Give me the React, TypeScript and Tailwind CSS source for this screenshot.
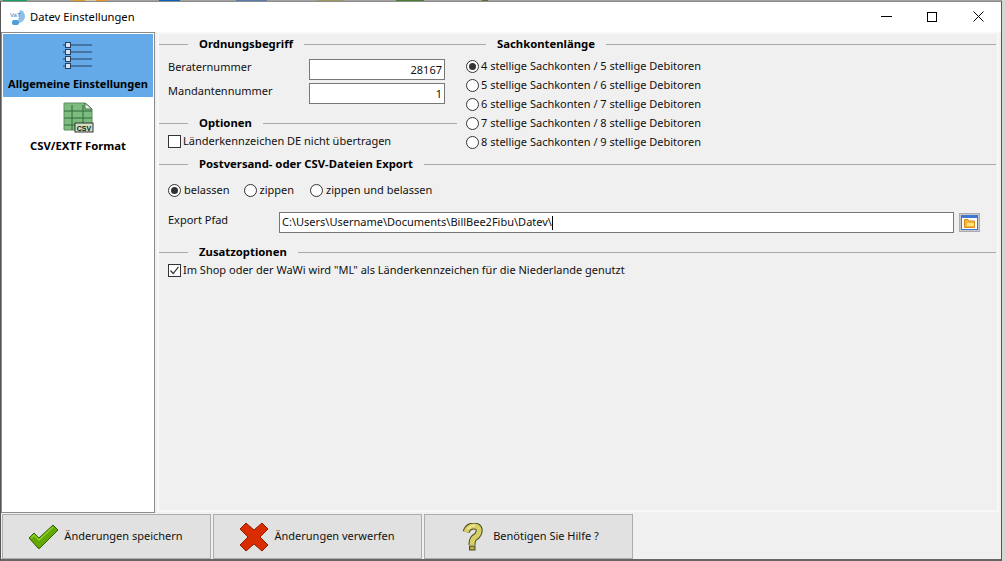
import React from 'react';

const font = { fontFamily: '"Noto Sans", "Open Sans", sans-serif' };

// bits of the desktop that show above the window edge
const desktopBits = [
  { w: 'w-[3px]', c: 'bg-[#a0a0a0]' },
  { w: 'w-[24px]', c: 'bg-[#12a05c]' },
  { w: 'w-[45px]', c: 'bg-[#a0a0a0]' },
  { w: 'w-[13px]', c: 'bg-[#e09a2a]' },
  { w: 'w-[11px]', c: 'bg-[#d8c8a8]' },
  { w: 'w-[12px]', c: 'bg-[#e8962a]' },
  { w: 'w-[51px]', c: 'bg-[#a0a0a0]' },
  { w: 'w-[21px]', c: 'bg-[#0a62b8]' },
  { w: 'w-[56px]', c: 'bg-[#a0a0a0]' },
  { w: 'w-[31px]', c: 'bg-[#5a78b0]' },
  { w: 'w-[50px]', c: 'bg-[#a0a0a0]' },
  { w: 'w-[27px]', c: 'bg-[#a09860]' },
  { w: 'w-[52px]', c: 'bg-[#a0a0a0]' },
  { w: 'w-[28px]', c: 'bg-[#4a7a30]' },
  { w: 'w-[58px]', c: 'bg-[#a0a0a0]' },
  { w: 'w-[6px]', c: 'bg-[#6a6a30]' },
];

const GroupTitle = ({ title }: { title: string }) => (
  <div className="flex items-center h-[16px]">
    <div className="w-[29px] h-[1px] bg-[#a9a9a9]" />
    <span className="mx-[11px] font-bold text-[11.3px] text-black whitespace-nowrap leading-[16px]">{title}</span>
    <div className="flex-1 h-[1px] bg-[#a9a9a9]" />
  </div>
);

const Radio = ({ checked = false }: { checked?: boolean }) => (
  <span className="w-[13px] h-[13px] rounded-full border border-[#333] bg-white flex items-center justify-center shrink-0">
    {checked && <span className="w-[7px] h-[7px] rounded-full bg-[#333]" />}
  </span>
);

const RadioRow = ({ label, checked }: { label: string; checked?: boolean }) => (
  <div className="flex items-center h-[19px] gap-[2px] text-[11px] text-[#111] whitespace-nowrap">
    <Radio checked={checked} />
    <span>{label}</span>
  </div>
);

const Check = ({ checked = false }: { checked?: boolean }) => (
  <span className="w-[13px] h-[13px] border border-[#333] bg-white flex items-center justify-center shrink-0">
    {checked && (
      <svg width="11" height="11" viewBox="0 0 11 11" fill="none" stroke="#333" strokeWidth="1.2">
        <path d="M1.5 5.5 L4.2 8.5 L9.5 1.8" />
      </svg>
    )}
  </span>
);

const FooterButton = ({ icon, label, className }: { icon: React.ReactNode; label: string; className: string }) => (
  <button className={`w-[209px] h-[45px] bg-[#e1e1e1] border border-[#adadad] flex items-center justify-center text-[11px] text-[#111] ${className}`}>
    {icon}
    <span>{label}</span>
  </button>
);

const ListIcon = () => (
  <svg width="30" height="28" viewBox="0 0 30 28" className="shrink-0">
    {[3, 10, 17, 24].map(y => (
      <g key={y}>
        <rect x="2.5" y={y - 2.5} width="5" height="5" fill="#d8e2f2" stroke="#27405f" />
        <path d={`M8 ${y} H29`} stroke="#27405f" strokeWidth="1" />
        <path d={`M0 ${y} H2`} stroke="#27405f" strokeWidth="1" />
      </g>
    ))}
  </svg>
);

const CsvIcon = () => (
  <svg width="31" height="32" viewBox="0 0 31 32" className="shrink-0">
    <path d="M1 1 H22 L29 7 V28 H1 Z" fill="#7dbb7f" stroke="#5f8f62" />
    <path d="M22 1 L22 7 L29 7 Z" fill="#e6f0e6" stroke="#47704a" />
    <path d="M1 9 H29 M1 16 H29 M1 23 H29 M9 3 V28 M20 3 V28" stroke="#2f6a3a" strokeWidth="1" />
    <rect x="12" y="21" width="18" height="9" fill="#cfe3c4" stroke="#333" />
    <text x="21" y="28.5" fontSize="7" fontWeight="700" textAnchor="middle" fill="#111" fontFamily="Liberation Sans">CSV</text>
  </svg>
);

const CheckIcon = () => (
  <svg width="31" height="26" viewBox="0 0 31 26" className="shrink-0">
    <path d="M1 14 L6 9 L11 14 L25 1 L30 6 L12 24 Q11 25 10 24 Z" fill="#62a800" stroke="#2f6100" strokeWidth="1" strokeLinejoin="round" />
    <path d="M3 14 L6 11 L11 16 L25 3" fill="none" stroke="#8fd02c" strokeWidth="1.5" />
  </svg>
);

const CrossIcon = () => (
  <svg width="30" height="30" viewBox="0 0 30 30" className="shrink-0">
    <path d="M7 1 L15 8 L23 1 L29 7 L21 15 L29 23 L23 29 L15 22 L7 29 L1 23 L9 15 L1 7 Z" fill="#d92c00" stroke="#8f1c00" strokeWidth="1" strokeLinejoin="round" />
  </svg>
);

const HelpIcon = () => (
  <svg width="21" height="28" viewBox="0 0 21 28" className="shrink-0">
    <path d="M4 9 Q6 3 12 3 Q18 3 17 9 Q16 13 12 15 Q10 17 10 22" fill="none" stroke="#4a4a20" strokeWidth="7" />
    <path d="M4 9 Q6 3 12 3 Q18 3 17 9 Q16 13 12 15 Q10 17 10 22" fill="none" stroke="#d8cf66" strokeWidth="5" />
    <path d="M6 6 Q9 2.5 13 2.5" fill="none" stroke="#f2eca0" strokeWidth="1.5" />
    <rect x="7.5" y="23" width="5.5" height="4" fill="#b3a93f" stroke="#4a4a20" />
  </svg>
);

const AppLogo = () => (
  <svg width="17" height="17" viewBox="0 0 17 17">
    <path d="M11 1 Q16 2 16 8 Q15 13 10 14 L9 8 Z" fill="#8fc0e8" />
    <path d="M1 3 H10 V9 H1 Z" fill="#fff" />
    <text x="1" y="8" fontSize="6" fill="#2c7fbd" fontFamily="Liberation Sans">VaT</text>
    <rect x="3" y="11" width="7" height="5" rx="2" fill="#4f9fd6" />
  </svg>
);

const FolderButton = () => (
  <button className="w-[21px] h-[19px] bg-[#c8c8c8] border border-[#adadad] p-[1px]">
    <div className="w-full h-full bg-white border border-[#3f78d0] border-t-[3px] flex items-center justify-center">
      <svg width="11" height="9" viewBox="0 0 11 9">
        <path d="M0.5 8.5 V0.5 H4 L5 2 H10.5 V8.5 Z" fill="#f7b733" stroke="#d98a1a" />
        <rect x="3" y="4" width="7" height="3" fill="#ffe680" />
      </svg>
    </div>
  </button>
);

const App: React.FC = () => {
  return (
    <div style={font} className="w-[1005px] h-[561px] bg-[#d6d6d6] overflow-hidden flex flex-col">
      <div className="h-px w-[1002px] flex shrink-0 bg-[#a0a0a0]">
        {desktopBits.map((b, i) => (
          <div key={i} className={`h-px ${b.w} ${b.c}`} />
        ))}
      </div>
      {/* Window */}
      <div className="w-[1002px] h-[560px] border-l border-[#555] border-t border-t-[#8c8c8c] border-r bg-[#f0f0f0] flex flex-col">
        {/* Title bar */}
        <div className="h-[30px] bg-white flex items-center shrink-0">
          <div className="ml-[8px] mr-[4px]"><AppLogo /></div>
          <span className="text-[11.2px] text-black">Datev Einstellungen</span>
          <div className="ml-auto flex items-center h-full pb-[1px]">
            <div className="w-[46px] flex justify-center"><div className="w-[11px] h-[1px] bg-black" /></div>
            <div className="w-[46px] flex justify-center"><div className="w-[10px] h-[10px] border border-black" /></div>
            <div className="w-[46px] flex justify-center">
              <svg width="11" height="11" viewBox="0 0 11 11"><path d="M0.5 0.5 L10.5 10.5 M10.5 0.5 L0.5 10.5" stroke="#000" strokeWidth="1" /></svg>
            </div>
          </div>
        </div>

        <div className="flex-1 flex min-h-0">
          {/* Sidebar */}
          <div className="w-[154px] h-[481px] bg-white border border-[#8c8c8c] shrink-0 p-px">
            <div className="h-[63px] bg-[#64aae8] flex flex-col items-center pt-[8px]">
              <ListIcon />
              <span className="font-bold text-[11px] text-black leading-[16px] mt-[6px] whitespace-nowrap">Allgemeine Einstellungen</span>
            </div>
            <div className="flex flex-col items-center pt-[5px]">
              <CsvIcon />
              <span className="font-bold text-[11.3px] text-black leading-[16px] mt-[4px] whitespace-nowrap">CSV/EXTF Format</span>
            </div>
          </div>

          {/* Main panel */}
          <div className="w-[842px] h-[480px] ml-[2px] border-2 border-[#f8f8f8] flex flex-col pt-[2px] pr-[1px]">
            <div className="flex">
              <div className="w-[298px] shrink-0">
                <GroupTitle title="Ordnungsbegriff" />
                <div className="pl-[9px] pr-[13px] pt-[7px] grid grid-cols-[141px_1fr] gap-y-[3px] items-center text-[11px] text-[#111]">
                  <span className="h-[21px] leading-[15px]">Beraternummer</span>
                  <input readOnly value="28167" className="h-[21px] w-[136px] border border-[#777] bg-white text-right pr-[2px] text-[11px] outline-none" />
                  <span className="h-[21px] leading-[15px]">Mandantennummer</span>
                  <input readOnly value="1" className="h-[21px] w-[136px] border border-[#777] bg-white text-right pr-[2px] text-[11px] outline-none" />
                </div>
                <div className="mt-[11px]"><GroupTitle title="Optionen" /></div>
                <div className="pl-[9px] pt-[1px] flex items-center gap-[2px] text-[11px] text-[#111] h-[19px]">
                  <Check />
                  <span>Länderkennzeichen DE nicht übertragen</span>
                </div>
              </div>
              <div className="flex-1">
                <GroupTitle title="Sachkontenlänge" />
                <div className="pl-[9px] pt-[5px]">
                  <RadioRow checked label="4 stellige Sachkonten / 5 stellige Debitoren" />
                  <RadioRow label="5 stellige Sachkonten / 6 stellige Debitoren" />
                  <RadioRow label="6 stellige Sachkonten / 7 stellige Debitoren" />
                  <RadioRow label="7 stellige Sachkonten / 8 stellige Debitoren" />
                  <RadioRow label="8 stellige Sachkonten / 9 stellige Debitoren" />
                </div>
              </div>
            </div>

            <div className="mt-[4px]"><GroupTitle title="Postversand- oder CSV-Dateien Export" /></div>
            <div className="pl-[9px] pt-[9px] flex items-center text-[11px] text-[#111] h-[28px]">
              <div className="flex items-center gap-[3px] mr-[14px]"><Radio checked /><span>belassen</span></div>
              <div className="flex items-center gap-[3px] mr-[16px]"><Radio /><span>zippen</span></div>
              <div className="flex items-center gap-[3px]"><Radio /><span>zippen und belassen</span></div>
            </div>
            <div className="pl-[9px] pt-[12px] flex items-center text-[11px] text-[#111]">
              <span className="w-[111px] h-[21px] leading-[15px]">Export Pfad</span>
              <div className="w-[675px] h-[21px] border border-[#777] bg-white flex items-center pl-[2px] text-[11px]">
                C:\Users\Username\Documents\BillBee2Fibu\Datev\<span className="w-px h-[14px] bg-black" />
              </div>
              <div className="ml-[5px]"><FolderButton /></div>
            </div>
            <div className="mt-[11px]"><GroupTitle title="Zusatzoptionen" /></div>
            <div className="pl-[9px] pt-[1px] flex items-center gap-[2px] text-[11px] text-[#111] h-[19px]">
              <Check checked />
              <span>Im Shop oder der WaWi wird "ML" als Länderkennzeichen für die Niederlande genutzt</span>
            </div>
          </div>
        </div>

        {/* Footer */}
        <div className="h-[47px] shrink-0 flex gap-[2px] pl-px border-b-2 border-[#666]">
          <FooterButton icon={<CheckIcon />} label="Änderungen speichern" className="gap-[5px] pr-[2px]" />
          <FooterButton icon={<CrossIcon />} label="Änderungen verwerfen" className="gap-[5px] pr-[1px]" />
          <FooterButton icon={<HelpIcon />} label="Benötigen Sie Hilfe ?" className="gap-[10px] pl-[4px]" />
        </div>
      </div>
    </div>
  );
};

export default App;
